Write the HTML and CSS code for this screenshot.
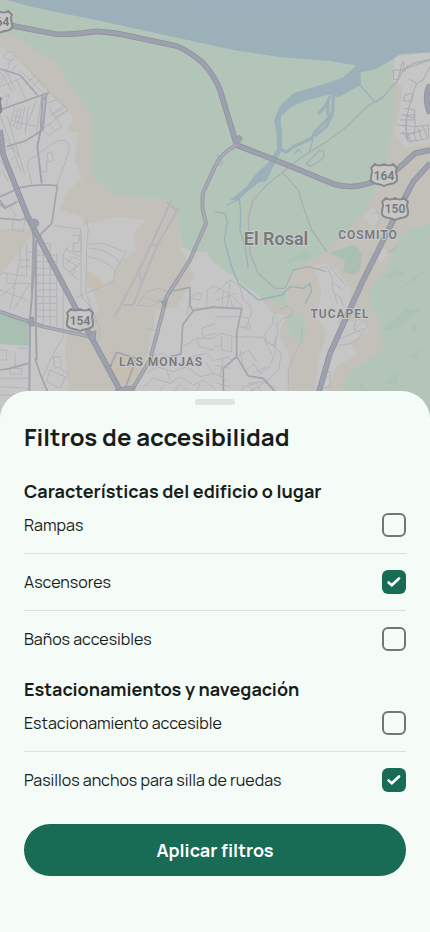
FILE: index.html
```html
<!DOCTYPE html>
<html lang="es">
<head>
<meta charset="utf-8">
<meta name="viewport" content="width=device-width, initial-scale=1">
<title>Filtros de accesibilidad</title>
<link rel="stylesheet" href="styles.css">
</head>
<body>
<main class="screen">
  <div class="map">
    <svg class="map-art" viewBox="0 0 430 420" preserveAspectRatio="xMidYMin slice" role="img" aria-label="Mapa">
      <defs>
        <path id="shield" d="M-9-11C-7-9-3-9 0-11C3-9 7-9 9-11L13-7C10-3 14 0 13 5C12 10 5 8 0 11C-5 8-12 10-13 5C-14 0-10-3-13-7Z"/>
      </defs>
      <g transform="scale(.33333)">
        <!-- Land -->
        <path class="green" d="M0 0H1290V157L1185 170 1175 240 1190 250 1180 400 1165 480 1115 600 1105 620 1045 690 975 760 905 800 855 845 860 890 870 915 850 920 775 885 705 835 645 790 620 755 575 755 545 740 535 660 500 600 340 585 275 530V345L205 250 180 200 160 180 110 155 45 105 0 98Z"/>
        <path class="sand" d="M0 98L45 105 110 155 160 180 180 200 205 250 275 345V530L340 585 500 600 535 660 545 755 585 825 530 920 470 930 440 1070 390 1180 360 1260H215L195 1070 200 1000 300 930 255 810 310 850 340 840 350 795 410 750 400 700 440 660 345 650 250 675 245 650 180 630 200 575 245 535 225 480 235 395H200L220 350 130 265 45 160 0 140Z"/>
        <path class="sand" d="M0 690Q60 680 110 690L70 740 30 790 0 825Z"/>
        <path class="sand" d="M1190 250L1230 300 1225 400 1260 440 1290 430V1260H860L870 1070 835 1000 860 945 815 940 775 885 850 920 870 915 855 845 905 800 975 760 1045 690 1105 620 1165 480 1180 400Z"/>
        <path class="urban" d="M1190 250H1290V425L1215 445 1180 400Z"/>
        <path class="sand" d="M1188 250L1208 262 1200 330 1180 400 1215 445 1180 480 1165 480Z"/>
        <path class="green" d="M1290 670L1215 690 1185 740 1165 800 1105 870 1110 920 1135 950 1150 1050 1045 1120 1000 1260H1290Z"/>
        <path class="green" d="M860 945L905 935 918 985 915 1025 890 1030 862 985Z"/>
        <path class="urban" d="M940 800L975 790 1010 810 1055 870 1045 925 1025 930 1010 975 1080 960 1110 990 1050 1030 1070 1065 1010 1100 975 1180 960 1260H940L955 1080 980 1000 950 950 965 870Z"/>
        <path class="urban" d="M1120 750L1140 735 1165 760 1140 790ZM1090 650L1120 625 1145 650 1120 680Z"/>
        <path class="green-deep" d="M990 760L1040 740 1065 735 1085 760 1080 810 1060 825 1030 815 1035 780Z"/>
        <path class="green-deep" d="M0 940L85 965V1037L0 1032ZM735 1180L760 1165 775 1200H740Z"/>
        <path class="amber" d="M262 810L308 845 290 870 262 860ZM340 1065L405 1075 430 1110 385 1165 350 1160 320 1110Z"/>
        <path class="shade" d="M1145 830L1195 810 1215 825 1170 835ZM1190 870L1260 820 1285 810 1220 855ZM1135 1000L1215 930 1270 925 1190 985ZM1230 1065L1262 1045 1250 1080ZM1150 1145L1190 1120 1195 1145 1170 1155ZM1230 985L1245 965 1250 1000ZM1080 1150L1115 1180 1105 1215 1075 1195ZM1200 1180L1240 1175 1220 1210ZM1155 760L1195 730 1185 755ZM860 785L920 750 935 775Z"/>
        <!-- Water -->
        <path class="water" d="M20 0L100 22 320 67 645 138 700 150 845 172 985 182 1065 196 1072 215 1085 217 1125 208 1175 180 1200 163 1290 157V0Z"/>
        <path class="violet" d="M200 0H1290V12H700Z"/>
        <path class="water" d="M1065 200L1082 218V254L1045 275 1015 292 985 284 915 302 875 320 843 348 842 365 847 400 846 450 815 510 800 542 775 548 745 572 716 600H690L738 562 765 525 810 482 832 445 830 400 822 360 840 318 880 280 980 250 1030 232Z"/>
        <path class="stream-wide" d="M1000 288L998 335 978 362 945 395 935 415 880 440 860 456 845 450"/>
        <path class="stream-wide" d="M990 288L978 315 955 342M984 300L983 345M998 340L980 378 945 408"/>
        <path class="stream" d="M1080 255L1125 307 1150 290M714 600L680 615M718 590L722 645 720 690 735 740 745 805M645 635L675 640 682 665 673 720 695 800 715 850 775 900 845 885 870 860 912 865 930 850 935 875 915 910M940 415L928 455M885 462L895 448 903 458"/>
        <!-- Local streets: north west -->
        <path class="lane" d="M10 170L20 155 38 156 46 170 36 183 12 175ZM30 183L25 205 0 240M46 170L205 330 110 400 125 285M0 215L40 278M15 205L45 270M0 260L75 230M0 250L55 190M85 245L110 222M50 240L78 298M75 255L102 230M90 265L120 240M60 210L135 285M0 300L28 282 18 318M45 320L30 375M55 325L40 378M65 325L50 385M75 320L60 388M85 320L75 405M35 345L65 355M32 360L60 370M30 375L58 387M110 300L75 390M45 365L112 380M145 320L185 380 145 406 130 390 112 400M155 345L200 320M162 355L205 330M20 345L75 525M0 345L65 520M10 410L60 470M20 450L45 440M30 480L58 465M40 505L68 495M0 480L30 525M5 510L25 545M140 310L175 298M145 350L190 316M130 385L150 372 160 390"/>
        <path class="lane" d="M105 470Q165 420 185 420 210 425 208 445L195 490 170 555M105 470Q80 480 83 500L95 552M140 460L155 455 160 480 145 488ZM140 480V515H125M0 620L45 610 60 600"/>
        <path class="street" d="M0 207L60 225 112 285M0 330L145 278 128 300M20 440L75 423 125 393M0 590L60 563Q110 550 172 557L160 640 155 670 115 710M0 610L15 625 50 605M0 655L60 660 95 650"/>
        <path class="avenue" d="M128 285L122 390 112 440 125 550M139 285L128 392"/>
        <!-- Local streets: south west -->
        <path class="lane" d="M60 600L30 625 45 640 35 690 70 695 75 655M162 677L243 688V890M242 690L235 730H220V755H243V707H220M258 650L265 690 260 740 258 880M265 733L310 730 378 758 345 812 340 845 230 892M265 770Q320 780 345 812M268 745Q320 745 358 785M205 740L190 760V800L235 840M195 745L240 770M195 775L235 800M200 790L218 770 238 780M205 820L240 790M215 830L225 805M190 865V1010L150 1080 130 1130M0 870L80 900M80 735V830L20 820M60 735V780L30 930M100 730H150M85 755H150M80 780H90M110 730V960M130 730V975M150 730V975M170 760V980M110 765H172M110 785H172M110 805H172M110 825H172M110 850H172M110 870H172M110 890H172M110 910H172M110 930H172M110 950H172M0 825L20 815M20 820V850H90M90 850L40 930M0 890L50 850M60 780H90M60 800H90"/>
        <path class="lane" d="M245 890Q280 920 300 990L295 1025M260 885L290 970M160 1070L180 1070 185 1100 165 1105ZM150 1110L195 1130 180 1165 140 1145ZM180 1105L205 1120 190 1150M0 1050H20V1080H0M30 1105H65V1122H30ZM55 1045H80M0 1135H85M45 1060V1100M0 1160L85 1165M0 1185H80"/>
        <path class="runway" d="M515 600L420 805 345 950M535 625L470 740 425 850 400 915H370M500 605L530 632M455 730L475 742M415 800L425 850"/>
        <path class="lane" d="M410 920L440 875 475 865 520 880M415 915L455 920 480 905M430 890L470 905 500 890M560 945L570 895 590 880 605 880 600 900 575 895M620 920L622 870 645 855M645 925L585 925M550 1040L590 1015H645M645 970L605 985 610 1010 645 1000M590 1020L600 1040 640 1050M440 1120L470 1100 520 1115 560 1100 600 1130 645 1120M430 1160L460 1135 510 1150 540 1130 580 1155 610 1140 645 1165M460 1085L450 1070 490 1060 520 1080M470 1185L490 1160M520 1180L540 1150 570 1180M590 1175L600 1150M550 1110L570 1070 620 1060 645 1085M440 985L465 992M500 1110L510 1140M620 1090L640 1120M340 1060L350 1058"/>
        <path class="street" d="M0 1110L30 1105 85 1090M95 665L100 715 95 880M105 1075L120 1120 145 1180M520 873L570 862V918L580 932 645 920M580 932L548 975 543 1062 510 1070M350 1057L420 1078M0 600L15 625M330 1100L350 1057M375 1165L410 1075"/>
        <path class="avenue" d="M100 665L103 800 90 960 88 1185M108 720L107 960 110 1080"/>
        <!-- Local streets: south centre -->
        <path class="lane" d="M645 880L690 840 720 860 730 900 750 915 755 940 735 990M645 860L685 880 700 925M670 870L665 925M690 850L680 925M700 890L730 925M645 900L710 880M645 950H715M720 980L750 985 745 955 725 950M705 1010L790 1012 845 1060 835 1110 800 1145M790 1015L820 1070 810 1100 780 1120M645 1010L665 1000 705 1012M665 1010V1050L695 1055V1015M645 1040L665 1035M670 1075L660 1130M645 1080L690 1070M645 1095L690 1105M645 1120L680 1140M650 1150L690 1160M690 1080L745 1050 770 1085M720 1050L730 1100M740 1110L760 1090 785 1125M755 1120L800 1100M745 1150L790 1145 830 1165M760 1170L810 1135M670 1170L710 1185M825 1010V1060M720 1190L730 1160 770 1150 790 1190M800 1150L840 1190"/>
        <path class="lane" d="M830 935Q810 960 820 970L795 1000 800 1030 825 1035 833 1000 830 970 850 955 870 950 880 930 860 918 835 930M905 985V1020L880 1070 865 1110V1170M950 805L980 800 995 830 1000 880 1020 890 1030 920M990 800L1015 830 1040 860M1000 850L1030 870M1005 880L1010 910M1000 1035Q1060 1040 1080 1010L1105 975M1070 960L1060 985 1085 1000M1060 990L1090 960M1010 1020L1095 985M970 1115H990V1160L970 1165M985 1130L965 1130M1115 640L1130 635 1140 660 1125 680"/>
        <path class="street" d="M645 922L725 926 710 1000V1070L745 1128 790 1135 825 1175M710 1070L670 1105V1190"/>
        <path class="track" d="M1290 178L1240 190 1210 210 1190 245 1150 290 1100 320 1040 380 980 425 900 475 845 520 800 555 760 600 745 650 750 760 775 820 825 865 855 865 880 810 925 800 980 815M850 520L895 570 910 620 935 690 980 755M920 490L960 450 972 455 970 475 930 500ZM648 466L660 470 668 490 650 498"/>
        <!-- Local streets: north east -->
        <path class="street-light" d="M1290 180L1240 198 1205 210H1180V238L1195 240 1205 190 1212 185V215L1225 195M1225 235L1250 250 1270 240 1290 200M1250 250L1235 290 1225 330 1215 380 1225 420M1215 285L1240 280 1235 305 1210 302ZM1215 325L1245 330 1240 355 1215 345M1205 345H1245V400H1200M1190 375L1245 380M1200 360H1245M1210 395L1225 425 1260 420 1285 415V375L1245 380M1220 405L1270 390M1235 430L1225 405M1250 425L1240 395M1265 415L1255 385M1280 410L1270 380M1220 345V420"/>
        <!-- Highways -->
        <g class="major-edge">
          <path d="M0 70L165 102Q210 105 290 94 340 96 420 115L530 138Q570 155 610 190 645 230 660 270L710 435 875 500 1000 552Q1060 570 1120 545L1190 510 1245 460 1290 450M1290 255Q1270 290 1290 340M1290 490L1240 545 1200 620 1085 850 990 1060 950 1200M0 390L10 465 85 655 230 930 365 1180"/>
        </g>
        <g class="major">
          <path d="M0 70L165 102Q210 105 290 94 340 96 420 115L530 138Q570 155 610 190 645 230 660 270L710 435 875 500 1000 552Q1060 570 1120 545L1190 510 1245 460 1290 450M1290 255Q1270 290 1290 340M1290 490L1240 545 1200 620 1085 850 990 1060 950 1200M0 390L10 465 85 655 230 930 365 1180"/>
        </g>
        <path class="secondary-edge" d="M710 435Q660 460 645 500L608 580 607 625 618 670 570 780 500 890 450 1080 390 1180M0 935L130 980 270 1010"/>
        <path class="secondary" d="M710 435Q660 460 645 500L608 580 607 625 618 670 570 780 500 890 450 1080 390 1180M0 935L130 980 270 1010"/>
        <path class="junction" d="M708 415Q718 400 725 412 727 425 710 432M84 662Q105 650 116 665 119 680 95 688ZM262 1002L288 992 284 1025 268 1018ZM87 952H101V978H87ZM318 1100L335 1095 325 1112ZM345 1170L375 1160 405 1158 400 1185H350ZM483 905L500 900 495 920Z"/>
      </g>
      <g class="badge">
        <use href="#shield" x="-1" y="22"/><text x="-1" y="26">164</text>
        <use href="#shield" x="-12" y="106"/>
        <use href="#shield" x="395" y="209"/><text x="395" y="213">150</text>
        <use href="#shield" x="384" y="175"/><text x="384" y="180">164</text>
        <use href="#shield" x="80" y="320"/><text x="80" y="325">154</text>
      </g>
      <g class="places">
        <text class="town" x="276" y="245">El Rosal</text>
        <text x="368" y="239">COSMITO</text>
        <text x="340" y="318">TUCAPEL</text>
        <text x="161" y="366">LAS MONJAS</text>
      </g>
    </svg>
  </div>

  <form class="sheet">
    <div class="handle"></div>
    <h1 class="title">Filtros de accesibilidad</h1>
    <div class="groups">
      <section class="group">
        <h2 class="group-title">Características del edificio o lugar</h2>
        <div class="options">
          <label class="option">Rampas<input class="check" type="checkbox" name="rampas"></label>
          <label class="option">Ascensores<input class="check" type="checkbox" name="ascensores" checked></label>
          <label class="option">Baños accesibles<input class="check" type="checkbox" name="banos"></label>
        </div>
      </section>
      <section class="group">
        <h2 class="group-title">Estacionamientos y navegación</h2>
        <div class="options">
          <label class="option">Estacionamiento accesible<input class="check" type="checkbox" name="estacionamiento"></label>
          <label class="option">Pasillos anchos para silla de ruedas<input class="check" type="checkbox" name="pasillos" checked></label>
        </div>
      </section>
    </div>
    <button class="apply" type="submit">Aplicar filtros</button>
  </form>
</main>
</body>
</html>
```
FILE: styles.css
```css
* {
  box-sizing: border-box;
}

body {
  margin: 0;
  background: #f5fbf7;
  color: #171d1b;
  font-family: Manrope, Inter, sans-serif;
}

.screen {
  display: flex;
  flex-direction: column;
  min-height: 100vh;
}

/* Map */
.map {
  position: relative;
  flex: 1;
  min-height: 240px;
  margin-bottom: -28px;
  background: #c6c6c7;
  overflow: hidden;
}

.map-art {
  position: absolute;
  inset: 0;
  width: 100%;
  height: 100%;
}

.map-art path {
  stroke-linejoin: round;
}

.green { fill: #b3c5b9; }
.green-deep { fill: #a9bfb1; }
.sand { fill: #c3c0ba; }
.amber { fill: #c6beaf; }
.urban { fill: #c6c6c7; }
.water { fill: #9bb0b8; }
.violet { fill: #9dafba; }
.shade { fill: #acbfb3; opacity: 0.7; }

.stream,
.stream-wide,
.lane,
.street,
.street-light,
.avenue,
.runway,
.track,
.major,
.major-edge,
.secondary,
.secondary-edge {
  fill: none;
}

.stream { stroke: #98afb9; stroke-width: 4; }
.stream-wide { stroke: #9bb0b8; stroke-width: 9; }
.lane { stroke: #b3b5b9; stroke-width: 3; }
.street { stroke: #a3a5ac; stroke-width: 5; }
.street-light { stroke: #a9abb0; stroke-width: 3; }
.avenue { stroke: #a0a3ab; stroke-width: 6; }
.runway { stroke: #b4b5bc; stroke-width: 6; }
.track { stroke: #a9afb1; stroke-width: 4; }
.major-edge { stroke: #8f929d; stroke-width: 17; }
.major { stroke: #9da1ad; stroke-width: 12; }
.secondary-edge { stroke: #979aa3; stroke-width: 12; }
.secondary { stroke: #a9acb4; stroke-width: 6; }
.junction { fill: #9da1ad; stroke: #9498a3; stroke-width: 3; }

.badge use {
  fill: #c6c6c7;
  stroke: #88898c;
  stroke-width: 2;
}

.badge text,
.places text {
  font-family: Roboto, sans-serif;
  font-size: 12px;
  font-weight: 600;
  text-anchor: middle;
  fill: #77797b;
}

.places text {
  letter-spacing: 1px;
  stroke: #c9c9ca;
  stroke-width: 2px;
  stroke-linejoin: round;
  paint-order: stroke;
}

.places .town {
  font-size: 18px;
  letter-spacing: 0;
}

/* Bottom sheet */
.sheet {
  position: relative;
  display: flex;
  flex-direction: column;
  padding: 8px 24px 56px;
  border-radius: 28px 28px 0 0;
  background: #f5fbf7;
}

.handle {
  align-self: center;
  width: 40px;
  height: 6px;
  border-radius: 3px;
  background: #dee4e0;
}

.title {
  margin: 14px 0 24px;
  font-size: 24px;
  line-height: 36px;
  font-weight: 700;
}

.groups {
  display: flex;
  flex-direction: column;
  gap: 26px;
}

.group-title {
  margin: 0 0 10px;
  font-size: 18px;
  line-height: 24px;
  font-weight: 700;
}

.option {
  display: flex;
  align-items: center;
  justify-content: space-between;
  gap: 16px;
  padding-bottom: 16px;
  font-size: 16px;
  line-height: 24px;
  font-weight: 400;
}

.option + .option {
  padding-top: 16px;
  border-top: 1px solid #dbe2de;
}

.option:last-child {
  padding-bottom: 0;
}

.check {
  appearance: none;
  flex: none;
  width: 24px;
  height: 24px;
  margin: 0;
  border: 2px solid #707874;
  border-radius: 6px;
}

.check:checked {
  border: 0;
  background: #186b54 url("data:image/svg+xml,%3Csvg xmlns='http://www.w3.org/2000/svg' viewBox='0 0 24 24'%3E%3Cpath d='M6.600 12.500L9.800 15.200 17 8.400' fill='none' stroke='white' stroke-width='2.700' stroke-linecap='round'/%3E%3C/svg%3E") center / 24px no-repeat;
}

.apply {
  margin-top: 32px;
  padding: 14px 24px;
  border: 0;
  border-radius: 26px;
  background: #186b54;
  color: #fff;
  font-family: inherit;
  font-size: 18px;
  line-height: 24px;
  font-weight: 700;
}
```
